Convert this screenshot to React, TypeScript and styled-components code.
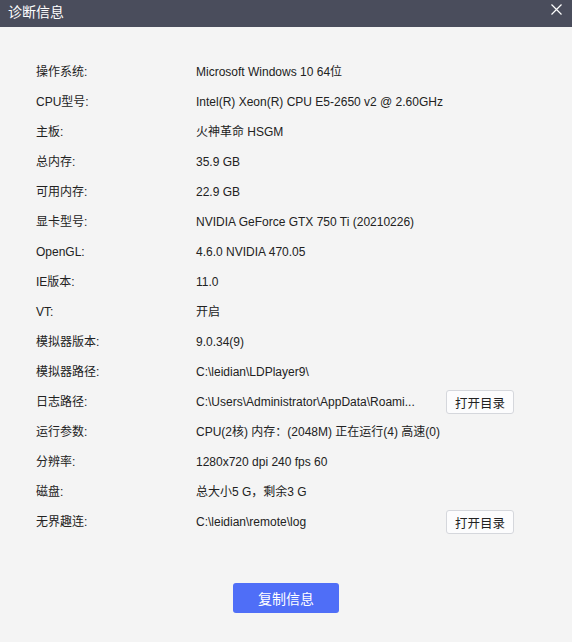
import React from 'react';
import styled, { createGlobalStyle } from 'styled-components';

const GlobalStyle = createGlobalStyle`
  html, body {
    margin: 0;
    padding: 0;
    background: #f4f4f4;
  }
  body {
    font-family: "Liberation Sans", "Noto Sans CJK SC", sans-serif;
  }
`;

type Row = { label: string; value: string; action?: string };

const rows: Row[] = [
  { label: '操作系统:', value: 'Microsoft Windows 10 64位' },
  { label: 'CPU型号:', value: 'Intel(R) Xeon(R) CPU E5-2650 v2 @ 2.60GHz' },
  { label: '主板:', value: '火神革命 HSGM' },
  { label: '总内存:', value: '35.9 GB' },
  { label: '可用内存:', value: '22.9 GB' },
  { label: '显卡型号:', value: 'NVIDIA GeForce GTX 750 Ti (20210226)' },
  { label: 'OpenGL:', value: '4.6.0 NVIDIA 470.05' },
  { label: 'IE版本:', value: '11.0' },
  { label: 'VT:', value: '开启' },
  { label: '模拟器版本:', value: '9.0.34(9)' },
  { label: '模拟器路径:', value: 'C:\\leidian\\LDPlayer9\\' },
  { label: '日志路径:', value: 'C:\\Users\\Administrator\\AppData\\Roami...', action: '打开目录' },
  { label: '运行参数:', value: 'CPU(2核) 内存：(2048M) 正在运行(4) 高速(0)' },
  { label: '分辨率:', value: '1280x720 dpi 240 fps 60' },
  { label: '磁盘:', value: '总大小5 G，剩余3 G' },
  { label: '无界趣连:', value: 'C:\\leidian\\remote\\log', action: '打开目录' },
];

const App: React.FC = () => {
  return (
    <Dialog>
      <GlobalStyle />
      <TitleBar>
        <Title>诊断信息</Title>
        <CloseButton aria-label="关闭">
          <svg width="11" height="11" viewBox="0 0 11 11">
            <path d="M0.5 0.5 L10.5 10.5 M10.5 0.5 L0.5 10.5" stroke="#ffffff" strokeWidth="1.2" />
          </svg>
        </CloseButton>
      </TitleBar>
      <Body>
        <InfoList>
          {rows.map((row) => (
            <InfoRow key={row.label}>
              <Label>{row.label}</Label>
              <Value $fixed={!!row.action}>{row.value}</Value>
              {row.action && <SmallButton>{row.action}</SmallButton>}
            </InfoRow>
          ))}
        </InfoList>
        <Footer>
          <PrimaryButton>复制信息</PrimaryButton>
        </Footer>
      </Body>
    </Dialog>
  );
};

const Dialog = styled.div`
  width: 572px;
  height: 642px;
  display: flex;
  flex-direction: column;
  background: #f4f4f4;
  overflow: hidden;
`;

const TitleBar = styled.div`
  height: 27px;
  flex: none;
  display: flex;
  align-items: center;
  justify-content: space-between;
  padding: 0 8px;
  background: #4a4d5c;
  box-sizing: border-box;
`;

const Title = styled.div`
  color: #ffffff;
  font-family: "Noto Sans CJK SC", sans-serif;
  font-size: 14px;
  line-height: 20px;
  margin-top: -6px;
`;

const CloseButton = styled.div`
  display: flex;
  align-items: center;
  justify-content: center;
  width: 12px;
  height: 12px;
  margin-top: -8px;
  margin-right: 2px;
`;

const Body = styled.div`
  flex: 1;
  display: flex;
  flex-direction: column;
  padding: 30px 0 0 36px;
`;

const InfoList = styled.div`
  display: flex;
  flex-direction: column;
`;

const InfoRow = styled.div`
  height: 30px;
  display: flex;
  align-items: center;
  font-size: 12px;
  line-height: 16px;
  color: #222222;
`;

const Label = styled.div`
  width: 160px;
  flex: none;
`;

const Value = styled.div<{ $fixed: boolean }>`
  white-space: nowrap;
  width: ${(p) => (p.$fixed ? '240px' : 'auto')};
  flex: none;
`;

const SmallButton = styled.button`
  margin-left: 10px;
  width: 68px;
  height: 24px;
  padding: 0;
  border: 1px solid #d5d7dc;
  border-radius: 3px;
  background: #fcfcfd;
  color: #222222;
  font-family: "Noto Sans CJK SC", sans-serif;
  font-size: 12.5px;
`;

const Footer = styled.div`
  display: flex;
  justify-content: center;
  padding-right: 36px;
  margin-top: 46px;
`;

const PrimaryButton = styled.button`
  width: 106px;
  height: 30px;
  border: none;
  border-radius: 3px;
  background: #4f6ef7;
  color: #ffffff;
  font-family: "Noto Sans CJK SC", sans-serif;
  font-size: 14px;
`;

export default App;
